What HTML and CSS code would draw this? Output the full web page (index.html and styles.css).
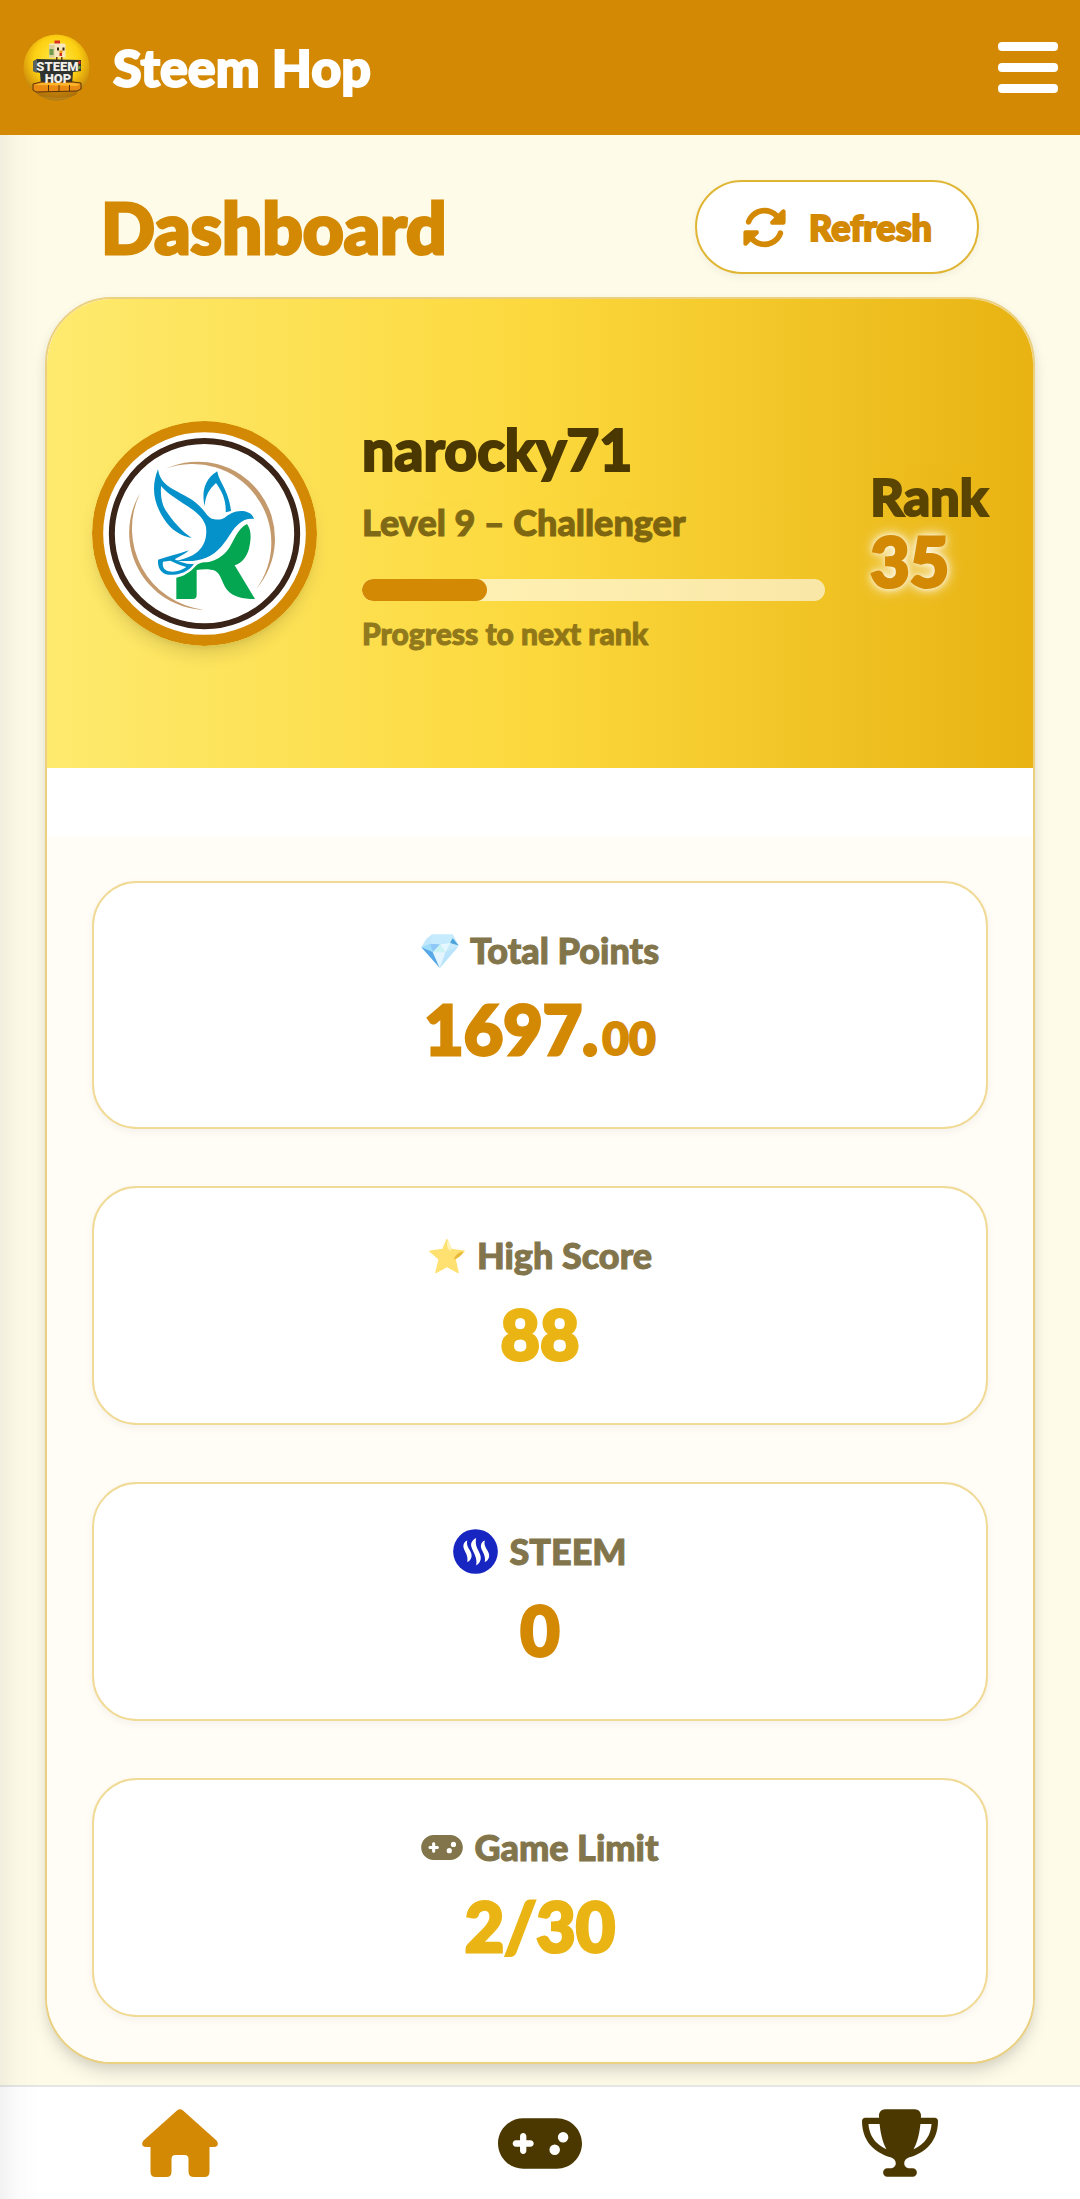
FILE: index.html
```html
<!DOCTYPE html>
<html lang="en">
<head>
<meta charset="utf-8">
<meta name="viewport" content="width=device-width, initial-scale=1">
<title>Steem Hop</title>
<link rel="stylesheet" href="styles.css">
</head>
<body>
<svg class="sprite" aria-hidden="true">
  <symbol id="gamepad" viewBox="0 64 640 384">
    <path fill="currentColor" d="M192 64C86 64 0 150 0 256S86 448 192 448l256 0c106 0 192-86 192-192s-86-192-192-192L192 64zM496 168a40 40 0 1 1 0 80 40 40 0 1 1 0-80zM392 304a40 40 0 1 1 80 0 40 40 0 1 1 -80 0zM168 200c0-13.3 10.7-24 24-24s24 10.7 24 24l0 32 32 0c13.3 0 24 10.7 24 24s-10.7 24-24 24l-32 0 0 32c0 13.3-10.7 24-24 24s-24-10.7-24-24l0-32-32 0c-13.3 0-24-10.7-24-24s10.7-24 24-24l32 0 0-32z"/>
  </symbol>
</svg>

<header class="topbar">
  <a class="brand" href="#">
    <svg class="brand-logo" viewBox="0 0 67 67" aria-hidden="true">
      <defs>
        <radialGradient id="ball" cx="50%" cy="38%" r="62%">
          <stop offset="0" stop-color="#ffe94a"/>
          <stop offset=".55" stop-color="#fdd012"/>
          <stop offset=".85" stop-color="#d79a0c"/>
          <stop offset="1" stop-color="#a87a1c"/>
        </radialGradient>
      </defs>
      <circle cx="33.500" cy="33.500" r="33" fill="url(#ball)"/>
      <ellipse cx="34" cy="59" rx="20" ry="5" fill="#a86608" opacity=".6"/>
      <path d="M31.500 6.500h5.500V11h-5.500z" fill="#d8301c"/>
      <path d="M26 11q0-1.500 1.500-1.500H41q1.500 0 1.500 1.500v12.500H26z" fill="#f7e7bd"/>
      <path d="M26 11h5.500v12.500H26z" fill="#d9cf9c"/>
      <path d="M26.500 15h4v6h-4z" fill="#6e9b4c"/>
      <path d="M34 13.500h2v3h-2zM39.500 13.500h2v3h-2z" fill="#3a2510"/>
      <path d="M36 16.500h4l-1 3h-2z" fill="#f59a16"/>
      <path d="M36.500 19h2.500v3h-2.500z" fill="#cf2c1a"/>
      <path d="M33 23h1.500v4H33zM38 23h1.500v4H38z" fill="#70380c"/>
      <path d="M10 27.500l4-2.500 44 1v11l-8 1-1 13H18l-1-12-7-2z" fill="#2e3330"/>
      <path d="M10 27.500l4-2.500v14l-4-2z" fill="#5b6360"/>
      <path d="M55.500 27h2v3h-2z" fill="#cf2c1a"/>
      <path d="M55.500 32h2v3h-2z" fill="#67a83a"/>
      <path d="M10 50l8-2h32l8 1v6l-4 2-41 1-3-2z" fill="#e98a12" stroke="#5b330a"/>
      <path d="M11 51l7-2h32l7 1-3 2z" fill="#fdb52b"/>
      <path d="M25.500 51v6M36 51v6M46.500 51v6" stroke="#5b330a" fill="none"/>
      <text class="logo-text" text-anchor="middle"><tspan x="34.500" y="37">STEEM</tspan><tspan x="35" y="48.500">HOP</tspan></text>
    </svg>
    <span>Steem Hop</span>
  </a>
  <button class="menu-button" type="button" aria-label="Menu">
    <span class="menu-bar"></span><span class="menu-bar"></span><span class="menu-bar"></span>
  </button>
</header>

<main class="page">
  <div class="page-head">
    <h1 class="page-title">Dashboard</h1>
    <button class="refresh" type="button">
      <svg class="refresh-icon" viewBox="0 0 512 512" aria-hidden="true"><path fill="currentColor" d="M142.900 142.900c62.200-62.200 162.700-62.500 225.300-1L327 183c-6.900 6.900-8.900 17.200-5.200 26.200s12.500 14.800 22.200 14.800l119.500 0c.3 0 .7 0 1 0H472c13.300 0 24-10.700 24-24V72c0-9.700-5.800-18.500-14.800-22.200s-19.300-1.700-26.200 5.200L413.400 96.600c-87.600-86.500-228.700-86.200-315.800 1C73.200 122 55.600 150.700 44.800 181.400c-5.900 16.700 2.900 34.900 19.500 40.800s34.900-2.900 40.800-19.500c7.700-21.800 20.200-42.300 37.800-59.800zM16 312v7.600.7V440c0 9.700 5.800 18.500 14.800 22.200s19.300 1.700 26.200-5.200l41.600-41.600c87.600 86.500 228.700 86.200 315.800-1c24.400-24.400 42.100-53.100 52.900-83.700c5.900-16.700-2.900-34.900-19.500-40.800s-34.900 2.900-40.800 19.500c-7.700 21.800-20.200 42.300-37.800 59.800c-62.200 62.200-162.700 62.500-225.300 1L185 329c6.900-6.900 8.900-17.200 5.200-26.200s-12.500-14.800-22.200-14.800H48.400h-.7H40c-13.300 0-24 10.700-24 24z"/></svg>
      <span>Refresh</span>
    </button>
  </div>

  <section class="card">
    <div class="profile">
      <svg class="avatar" viewBox="36 33 675 675" role="img" aria-label="narocky71">
        <circle cx="373.500" cy="370.500" r="337.500" fill="#d38903"/>
        <circle cx="373.500" cy="370.500" r="304" fill="#fff"/>
        <circle cx="373.500" cy="371" r="278" fill="none" stroke="#3a2317" stroke-width="18"/>
        <path d="M258 176A231 231 0 0 1 528 538A236 236 0 0 0 258 176z" fill="#c49a6c"/>
        <path d="M180 250A231 231 0 0 0 370 599A245 245 0 0 1 180 250z" fill="#c49a6c"/>
        <path d="M501 342C516 362 513 392 507 416C500 440 488 457 464 466L525 567C486 567 459 560 441 539C424 517 424 491 405 482C393 477 371 476 350 480V556Q350 567 339 567H289V503C310 499 330 488 347 468C356 459 366 456 380 457C406 453 429 439 446 416C463 392 472 356 501 342z" fill="#04a652"/>
        <path fill-rule="evenodd" d="M234 178C238 205 252 222 279 238C310 256 345 268 372 303C382 316 388 325 400 327C412 330 424 329 434 323C447 312 466 301 488 303C507 305 519 314 522 327C503 325 489 331 476 342C458 356 449 379 434 397C409 433 376 450 338 453L285 453C307 448 335 441 353 425C372 407 382 384 378 351C372 327 355 311 335 297C304 275 268 257 243 228C241 260 246 285 259 304C281 336 303 362 335 384C302 377 274 361 252 327C225 286 210 236 234 178z" fill="#0592cb"/>
        <path d="M412 184C416 215 447 242 453 303L437 307C439 273 427 245 408 219C387 238 376 258 374 288C366 256 368 210 412 184z" fill="#0592cb"/>
        <path fill-rule="evenodd" d="M234 449C261 440 293 433 327 421C315 434 297 440 284 448C310 461 327 464 342 461C326 486 296 496 265 494C244 491 232 474 234 449zM249 455C246 471 253 480 266 484C286 488 306 481 319 471C302 466 286 459 271 452z" fill="#0592cb"/>
      </svg>
      <div class="profile-info">
        <h2 class="user-name">narocky71</h2>
        <p class="user-level">Level 9 – Challenger</p>
        <div class="progress" role="progressbar" aria-label="Progress to next rank" aria-valuenow="27" aria-valuemin="0" aria-valuemax="100">
          <div class="progress-fill" style="width: 27%"></div>
        </div>
        <p class="progress-note">Progress to next rank</p>
      </div>
      <div class="rank">
        <div class="rank-label">Rank</div>
        <div class="rank-value">35</div>
      </div>
    </div>

    <div class="stats">
      <article class="stat">
        <h3 class="stat-label">
          <svg class="emoji" viewBox="116 102 111 104" aria-hidden="true">
            <path d="M117 143L131 118L148 106H209L226 137L171 204z" fill="#c7ebfb"/>
            <path d="M117 143L148 106L161 121L143 133z" fill="#bfe6fb"/>
            <path d="M117 143L143 133L168 130L150 157z" fill="#9ddcfb"/>
            <path d="M117 143L150 157L171 204z" fill="#58a7e6"/>
            <path d="M143 133L172 134L151 157z" fill="#8fc7f6"/>
            <path d="M172 134L151 158L188 157z" fill="#cbf3f3"/>
            <path d="M172 134L188 157L202 130z" fill="#e5f7ff"/>
            <path d="M151 158H188L171 204z" fill="#e4f5ff"/>
            <path d="M188 157L226 140L171 204z" fill="#b9e4fb"/>
            <path d="M209 117L226 138L199 130z" fill="#4ba3d9"/>
            <path d="M148 106H209L202 130L172 134L143 133z" fill="#c5ebfd"/>
          </svg>
          <span>Total Points</span>
        </h3>
        <p class="stat-value">1697.<span class="stat-fraction">00</span></p>
      </article>

      <article class="stat">
        <h3 class="stat-label">
          <svg class="emoji" viewBox="150 111 114 112" aria-hidden="true">
            <path d="M207 117L220 147L260 152L232 177L241 218L207 199L173 218L183 177L154 152L194 147z" fill="#ffe171" stroke="#ffe171" stroke-width="5" stroke-linejoin="round"/>
            <path d="M208 119C206 130 207 143 217 152C223 143 216 129 208 119z" fill="#fff3b8"/>
            <path d="M258 154C246 152 231 165 228 178C238 176 252 167 258 154z" fill="#e9b93c"/>
          </svg>
          <span>High Score</span>
        </h3>
        <p class="stat-value stat-value-bright">88</p>
      </article>

      <article class="stat">
        <h3 class="stat-label">
          <svg class="coin" viewBox="221 89 136 136" aria-hidden="true">
            <circle cx="289" cy="157" r="67.500" fill="#1726c1"/>
            <g fill="#fff">
              <path d="M264 124C254 128 250 138 254 149C258 160 268 172 264 189C274 184 280 174 276 162C272 150 260 142 264 124z"/>
              <path d="M291 116C279 122 273 132 277 144C282 160 296 176 291 199C303 192 308 180 303 166C298 151 286 140 291 116z"/>
              <path d="M317 124C307 128 303 138 307 149C311 160 321 172 317 189C327 184 333 174 329 162C325 150 313 142 317 124z"/>
            </g>
          </svg>
          <span>STEEM</span>
        </h3>
        <p class="stat-value">0</p>
      </article>

      <article class="stat">
        <h3 class="stat-label">
          <svg class="label-gamepad" aria-hidden="true"><use href="#gamepad"/></svg>
          <span>Game Limit</span>
        </h3>
        <p class="stat-value stat-value-bright">2/30</p>
      </article>
    </div>
  </section>
</main>

<nav class="tabbar" aria-label="Main">
  <a class="tab tab-active" href="#" aria-label="Home">
    <svg class="tab-icon" viewBox="0 0 76 68" aria-hidden="true"><path fill="currentColor" d="M35 1.500Q38-1.200 41 1.500L74.500 31.500Q77 34.500 75 37Q74 38 72 38H67.500V62.500Q67.500 68 62.500 68H52Q46.500 68 46.500 62.500V50Q46.500 46 42.500 46H33.500Q29.500 46 29.500 50V62.500Q29.500 68 24.500 68H13.500Q8.500 68 8.500 62.500V38H4Q2 38 1 37Q-1 34.500 1.500 31.500z"/></svg>
  </a>
  <a class="tab" href="#" aria-label="Play">
    <svg class="tab-gamepad" aria-hidden="true"><use href="#gamepad"/></svg>
  </a>
  <a class="tab" href="#" aria-label="Leaderboard">
    <svg class="tab-icon" viewBox="0 0 576 512" aria-hidden="true"><path fill="currentColor" d="M400 0L176 0c-26.500 0-48.100 21.800-47.100 48.200c.2 5.300 .4 10.600 .7 15.800L24 64C10.700 64 0 74.700 0 88c0 92.600 33.500 157 78.500 200.700c44.300 43.100 98.300 64.800 138.100 75.800c23.400 6.500 39.400 26 39.400 45.600c0 20.900-17 37.900-37.900 37.900L192 448c-17.700 0-32 14.300-32 32s14.300 32 32 32l192 0c17.700 0 32-14.300 32-32s-14.300-32-32-32l-26.100 0C337 448 320 431 320 410.100c0-19.600 15.900-39.200 39.400-45.600c39.900-11 93.900-32.700 138.200-75.800C542.500 245 576 180.600 576 88c0-13.300-10.700-24-24-24L446.400 64c.3-5.200 .5-10.400 .7-15.800C448.100 21.800 426.500 0 400 0zM48.900 112l84.400 0c9.100 90.100 29.200 150.300 51.900 190.600c-24.900-11-50.800-26.500-73.200-48.300c-32-31.100-58-76-63-142.300zM464.100 254.300c-22.400 21.800-48.300 37.300-73.200 48.300c22.700-40.300 42.800-100.500 51.900-190.600l84.400 0c-5.100 66.300-31.100 111.200-63 142.300z"/></svg>
  </a>
</nav>
<div class="drawer-shadow"></div>
</body>
</html>
```
FILE: styles.css
```css
:root {
  --amber: #d38903;
  --gold: #eab514;
  --brown: #4b3800;
  --cream: #fffbe9;
}

* {
  box-sizing: border-box;
}

body {
  margin: 0;
  min-height: 100vh;
  display: flex;
  flex-direction: column;
  background: var(--cream);
  color: var(--brown);
  font-family: Lato, "Open Sans", sans-serif;
  font-weight: 900;
  -webkit-text-stroke: 1px currentColor;
  stroke-linejoin: round;
}

h1, h2, h3, p {
  margin: 0;
  font-weight: 900;
}

svg {
  display: block;
  flex: none;
}

button {
  font: inherit;
  cursor: pointer;
}

.sprite {
  position: absolute;
  width: 0;
  height: 0;
}

/* Top bar */
.topbar {
  display: flex;
  align-items: center;
  justify-content: space-between;
  padding: 34px 22px 34px 23px;
  background: var(--amber);
}

.brand {
  display: flex;
  align-items: center;
  gap: 23px;
  color: #fff;
  font-size: 52px;
  line-height: 67px;
  text-decoration: none;
  -webkit-text-stroke-width: 2px;
}

.brand-logo {
  width: 67px;
  height: 67px;
}

.logo-text {
  font-family: Roboto, sans-serif;
  font-size: 13px;
  font-weight: 900;
  fill: #f1efe8;
  -webkit-text-stroke-width: 0;
}

.menu-button {
  display: grid;
  gap: 12px;
  width: 60px;
  padding: 0;
  border: 0;
  background: none;
}

.menu-bar {
  height: 9px;
  border-radius: 4px;
  background: #fff;
}

/* Page heading */
.page {
  flex: 1;
  padding: 45px 45px 19px;
}

.page-head {
  display: flex;
  align-items: center;
  justify-content: space-between;
  padding: 0 56px;
  margin-bottom: 23px;
}

.page-title {
  color: var(--amber);
  font-size: 71px;
  line-height: 80px;
  -webkit-text-stroke-width: 3px;
}

.refresh {
  display: flex;
  align-items: center;
  gap: 22px;
  height: 94px;
  padding: 0 45px;
  border: 2px solid #e0b533;
  border-radius: 47px;
  background: #fff;
  color: var(--amber);
  font-size: 36px;
  box-shadow: 0 3px 8px rgba(0, 0, 0, .05);
  -webkit-text-stroke: 2px currentColor;
}

.refresh-icon {
  width: 45px;
  height: 45px;
}

/* Profile card */
.card {
  overflow: hidden;
  border: 2px solid #ebd080;
  border-radius: 67px;
  background: #fff;
  box-shadow: 0 11px 17px -3px rgba(0, 0, 0, .13), 0 3px 11px rgba(0, 0, 0, .06);
}

.profile {
  display: grid;
  grid-template-columns: auto 1fr auto;
  align-items: center;
  gap: 45px;
  padding: 114px 45px 115px;
  background: linear-gradient(90deg, #feea6e, #fcd83c 50%, #e8b313);
}

.avatar {
  width: 225px;
  height: 225px;
  border-radius: 50%;
  box-shadow: 0 11px 17px -3px rgba(0, 0, 0, .12), 0 4px 7px -4px rgba(0, 0, 0, .1);
}

.user-name {
  font-size: 57px;
  line-height: 72px;
  -webkit-text-stroke-width: 2px;
}

.user-level {
  margin-top: 14px;
  font-size: 36px;
  line-height: 46px;
  opacity: .7;
}

.progress {
  height: 22px;
  margin: 34px 0 12px;
  border-radius: 11px;
  background: rgba(255, 255, 255, .6);
  overflow: hidden;
}

.progress-fill {
  height: 100%;
  border-radius: 11px;
  background: var(--amber);
}

.progress-note {
  font-size: 30px;
  line-height: 40px;
  opacity: .6;
}

.rank-label {
  font-size: 52px;
  line-height: 56px;
  opacity: .9;
  -webkit-text-stroke-width: 2px;
}

.rank-value {
  color: var(--amber);
  font-size: 68px;
  line-height: 74px;
  text-shadow: 0 0 6px #fff, 0 0 11px #fff, 0 0 17px rgba(255, 255, 255, .8);
  -webkit-text-stroke-width: 3px;
}

/* Stats */
.stats {
  display: grid;
  gap: 57px;
  margin-top: 68px;
  padding: 45px;
  background: #fffdf6;
}

.stat {
  padding: 45px 45px 56px;
  border: 2px solid #f0da96;
  border-radius: 45px;
  background: #fff;
  text-align: center;
  box-shadow: 0 3px 8px rgba(0, 0, 0, .05);
}

.stat-label {
  display: flex;
  align-items: center;
  justify-content: center;
  gap: 11px;
  color: #82754b;
  font-size: 36px;
  line-height: 45px;
}

.emoji {
  width: 38px;
  height: 36px;
}

.coin {
  width: 45px;
  height: 45px;
}

.label-gamepad {
  width: 42px;
  height: 25px;
}

.stat-value {
  margin-top: 22px;
  color: var(--amber);
  font-size: 68px;
  line-height: 67px;
  -webkit-text-stroke-width: 3px;
}

.stat-value-bright {
  color: var(--gold);
}

.stat-fraction {
  margin-left: 4px;
  font-size: 46px;
  -webkit-text-stroke-width: 2px;
}

/* Bottom tabs */
.tabbar {
  position: sticky;
  bottom: 0;
  display: grid;
  grid-template-columns: repeat(3, 1fr);
  border-top: 2px solid #e6e6e6;
  background: #fff;
}

.tab {
  display: flex;
  align-items: center;
  justify-content: center;
  height: 112px;
  color: var(--brown);
}

.tab-active {
  color: var(--amber);
}

.tab-icon {
  width: 76px;
  height: 68px;
}

.tab-gamepad {
  width: 84px;
  height: 51px;
}

/* Edge shade cast by the closed side drawer */
.drawer-shadow {
  position: fixed;
  top: 135px;
  bottom: 0;
  left: 0;
  width: 42px;
  background: linear-gradient(90deg, rgba(0, 0, 0, .05), rgba(0, 0, 0, .015) 40%, transparent);
  pointer-events: none;
}
```
